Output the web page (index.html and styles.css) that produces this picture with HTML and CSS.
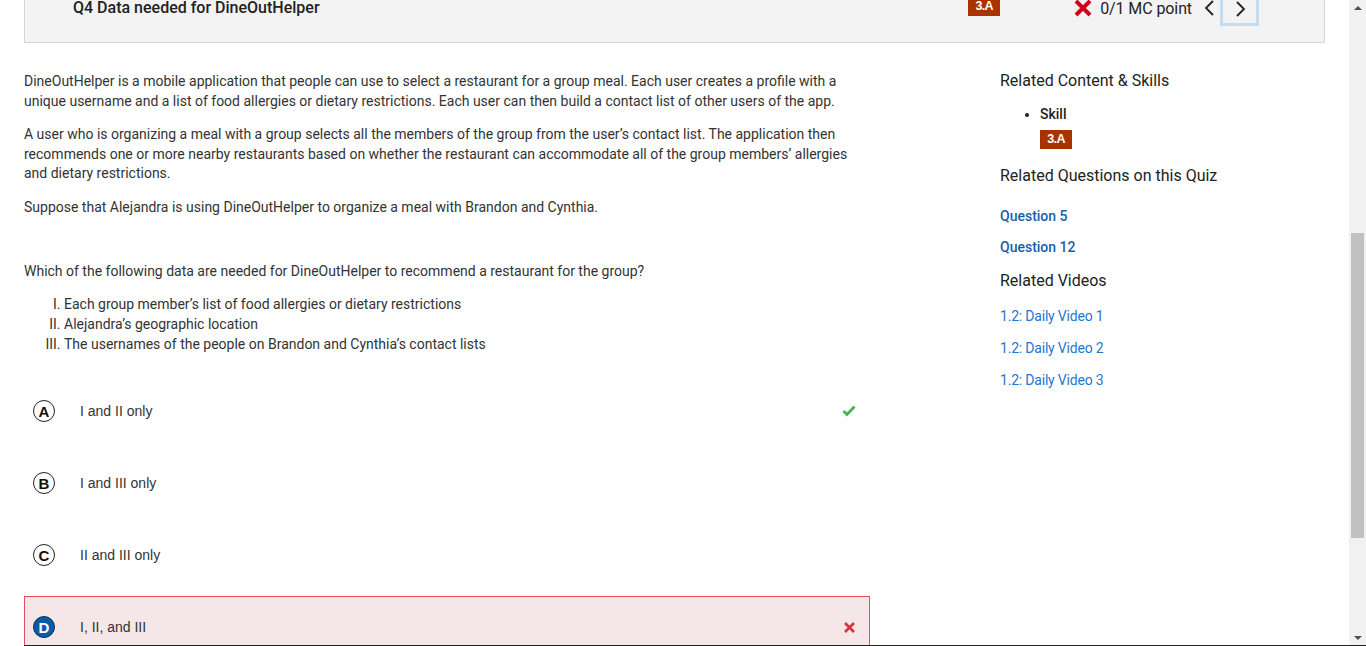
FILE: index.html
```html
<!DOCTYPE html>
<html lang="en">
<head>
<meta charset="utf-8">
<title>Q4 Data needed for DineOutHelper</title>
<link rel="stylesheet" href="styles.css">
</head>
<body>
<div class="page">
  <header class="qhead">
    <h1 class="qtitle">Q4 Data needed for DineOutHelper</h1>
    <div class="qmeta">
      <span class="badge">3.A</span>
      <span class="score">
        <svg class="xicon" width="18" height="18" viewBox="0 0 18 18"><path d="M2 2 L16 16 M16 2 L2 16" stroke="#d0021b" stroke-width="4" stroke-linecap="butt"/></svg>
        <span>0/1 MC point</span>
      </span>
      <button class="nav prev" aria-label="Previous"><svg width="12" height="16" viewBox="0 0 12 16"><polyline points="9,1 2,8 9,15" fill="none" stroke="#222" stroke-width="1.8"/></svg></button>
      <button class="nav next" aria-label="Next"><svg width="12" height="16" viewBox="0 0 12 16"><polyline points="3,1 10,8 3,15" fill="none" stroke="#222" stroke-width="1.8"/></svg></button>
    </div>
  </header>

  <div class="content">
    <main class="question">
      <p>DineOutHelper is a mobile application that people can use to select a restaurant for a group meal. Each user creates a profile with a unique username and a list of food allergies or dietary restrictions. Each user can then build a contact list of other users of the app.</p>
      <p>A user who is organizing a meal with a group selects all the members of the group from the user’s contact list. The application then recommends one or more nearby restaurants based on whether the restaurant can accommodate all of the group members’ allergies and dietary restrictions.</p>
      <p>Suppose that Alejandra is using DineOutHelper to organize a meal with Brandon and Cynthia.</p>
      <p class="ask">Which of the following data are needed for DineOutHelper to recommend a restaurant for the group?</p>
      <ol class="roman">
        <li>Each group member’s list of food allergies or dietary restrictions</li>
        <li>Alejandra’s geographic location</li>
        <li>The usernames of the people on Brandon and Cynthia’s contact lists</li>
      </ol>

      <div class="options">
        <div class="option">
          <span class="letter">A</span>
          <span class="otext">I and II only</span>
          <svg class="mark" width="14" height="12" viewBox="0 0 14 12"><polyline points="1.5,6 5,9.5 12.5,1.5" fill="none" stroke="#4caf50" stroke-width="2.8"/></svg>
        </div>
        <div class="option">
          <span class="letter">B</span>
          <span class="otext">I and III only</span>
        </div>
        <div class="option">
          <span class="letter">C</span>
          <span class="otext">II and III only</span>
        </div>
        <div class="option wrong">
          <span class="letter chosen">D</span>
          <span class="otext">I, II, and III</span>
          <svg class="mark" width="13" height="13" viewBox="0 0 13 13"><path d="M2 2 L11 11 M11 2 L2 11" stroke="#d2343d" stroke-width="2.6"/></svg>
        </div>
      </div>
    </main>

    <aside class="related">
      <h3 class="rtitle">Related Content &amp; Skills</h3>
      <ul class="skills">
        <li>Skill
          <div><span class="badge">3.A</span></div>
        </li>
      </ul>
      <h3 class="rtitle rq">Related Questions on this Quiz</h3>
      <a class="qlink" href="#">Question 5</a>
      <a class="qlink" href="#">Question 12</a>
      <h3 class="rtitle rv">Related Videos</h3>
      <a class="vlink" href="#">1.2: Daily Video 1</a>
      <a class="vlink" href="#">1.2: Daily Video 2</a>
      <a class="vlink" href="#">1.2: Daily Video 3</a>
    </aside>
  </div>
</div>
<div class="scrollbar">
  <span class="arrow up"></span>
  <div class="track"><div class="thumb"></div></div>
  <span class="arrow down"></span>
</div>
<div class="bottom-edge"></div>
</body>
</html>
```

FILE: styles.css
```css
* { box-sizing: border-box; }

html, body {
  margin: 0;
  height: 646px;
  overflow: hidden;
}

body {
  display: flex;
  position: relative;
  background: #fff;
  font-family: Roboto, "Liberation Sans", Arial, sans-serif;
  color: #333;
  font-size: 14px;
}

.page {
  flex: 1;
  padding: 0 24px;
  overflow: hidden;
}

/* header */
.qhead {
  margin-top: -24px;
  background: #f3f3f3;
  border: 1px solid #d6d6d6;
  padding: 14px 65px 17px 48px;
  display: flex;
  align-items: center;
  justify-content: space-between;
}

.qtitle {
  margin: 0;
  font-size: 16px;
  font-weight: 500;
  line-height: 34px;
  color: #222;
}

.qmeta {
  display: flex;
  align-items: center;
  height: 34px;
}

.badge {
  display: inline-block;
  width: 32px;
  height: 19px;
  line-height: 19px;
  background: #a83200;
  color: #fff;
  font-family: "Liberation Sans", Arial, sans-serif;
  font-weight: bold;
  font-size: 12.5px;
  text-align: center;
  letter-spacing: -0.6px;
}

.qmeta .badge {
  margin-top: -3px;
  margin-right: 74px;
}

.score {
  display: flex;
  align-items: center;
  gap: 8px;
  font-size: 16px;
  color: #222;
  margin-right: 8px;
  letter-spacing: -0.1px;
}

.xicon { display: block; margin-top: -1px; }

.nav {
  background: none;
  border: 3px solid transparent;
  padding: 0;
  height: 35px;
  display: flex;
  align-items: center;
  justify-content: center;
  cursor: pointer;
}

.nav.prev { width: 20px; margin-top: -1px; }
.nav.next {
  width: 39px;
  border-color: #c5dbee;
  margin-top: 1px;
}

/* content grid */
.content {
  display: grid;
  grid-template-columns: 846px 1fr;
  column-gap: 130px;
  padding-top: 29px;
}

.question p {
  margin: 0 0 14px;
  line-height: 1.4;
  width: 830px;
}

.question .ask {
  margin-top: 44px;
  margin-bottom: 13px;
}

.roman {
  list-style: upper-roman;
  margin: 0;
  padding-left: 40px;
  line-height: 20px;
}

.options {
  margin-top: 26px;
  display: flex;
  flex-direction: column;
  gap: 10px;
}

.option {
  height: 62px;
  border: 1px solid transparent;
  padding: 0 13px 0 9px;
  display: flex;
  align-items: center;
  font-family: "Liberation Sans", Arial, sans-serif;
  color: #333;
}

.option.wrong {
  background: #f5e6e7;
  border-color: #e4505f;
}

.letter {
  width: 22px;
  height: 22px;
  margin-left: -1px;
  border: 1px solid #222;
  border-radius: 50%;
  display: flex;
  align-items: center;
  justify-content: center;
  font-weight: bold;
  font-size: 15px;
  color: #111;
  flex-shrink: 0;
}

.letter.chosen {
  background: #0b5ca8;
  color: #fff;
  border: 1px solid #0a2c4f;
}

.otext {
  margin-left: 25px;
  flex: 1;
}

.mark { display: block; }

/* related sidebar */
.related {
  display: flex;
  flex-direction: column;
  align-items: flex-start;
  margin-top: -1px;
}

.rtitle {
  margin: 0;
  font-size: 16px;
  font-weight: 400;
  line-height: 20px;
  color: #222;
}

.skills {
  margin: 13px 0 0;
  padding-left: 40px;
  line-height: 20px;
  font-weight: 500;
  color: #222;
}

.skills .badge { margin-top: 6px; }

.rtitle.rq { margin-top: 17px; margin-bottom: 1px; }

.qlink {
  color: #1a5ea8;
  font-weight: 500;
  text-decoration: none;
  line-height: 20px;
  margin-top: 11px;
}
.rq + .qlink { margin-top: 19px; }

.rtitle.rv { margin-top: 14px; }

.vlink {
  color: #2477d2;
  text-decoration: none;
  line-height: 20px;
  margin-top: 12px;
  letter-spacing: -0.2px;
}
.rv + .vlink { margin-top: 15px; }

/* fake browser scrollbar */
.scrollbar {
  width: 17px;
  flex-shrink: 0;
  background: #f1f1f1;
  display: flex;
  flex-direction: column;
  align-items: center;
}

.arrow {
  width: 0;
  height: 0;
  border-left: 4px solid transparent;
  border-right: 4px solid transparent;
  margin: 6px 0;
}
.arrow.up { border-bottom: 4px solid #505050; }
.arrow.down { border-top: 4px solid #505050; }

.track {
  flex: 1;
  width: 100%;
  padding: 217px 2px 0;
}

.thumb {
  height: 305px;
  background: #c1c1c1;
}

.bottom-edge {
  position: absolute;
  left: 24px;
  right: 0;
  bottom: 0;
  height: 1px;
  background: #222;
}
```
